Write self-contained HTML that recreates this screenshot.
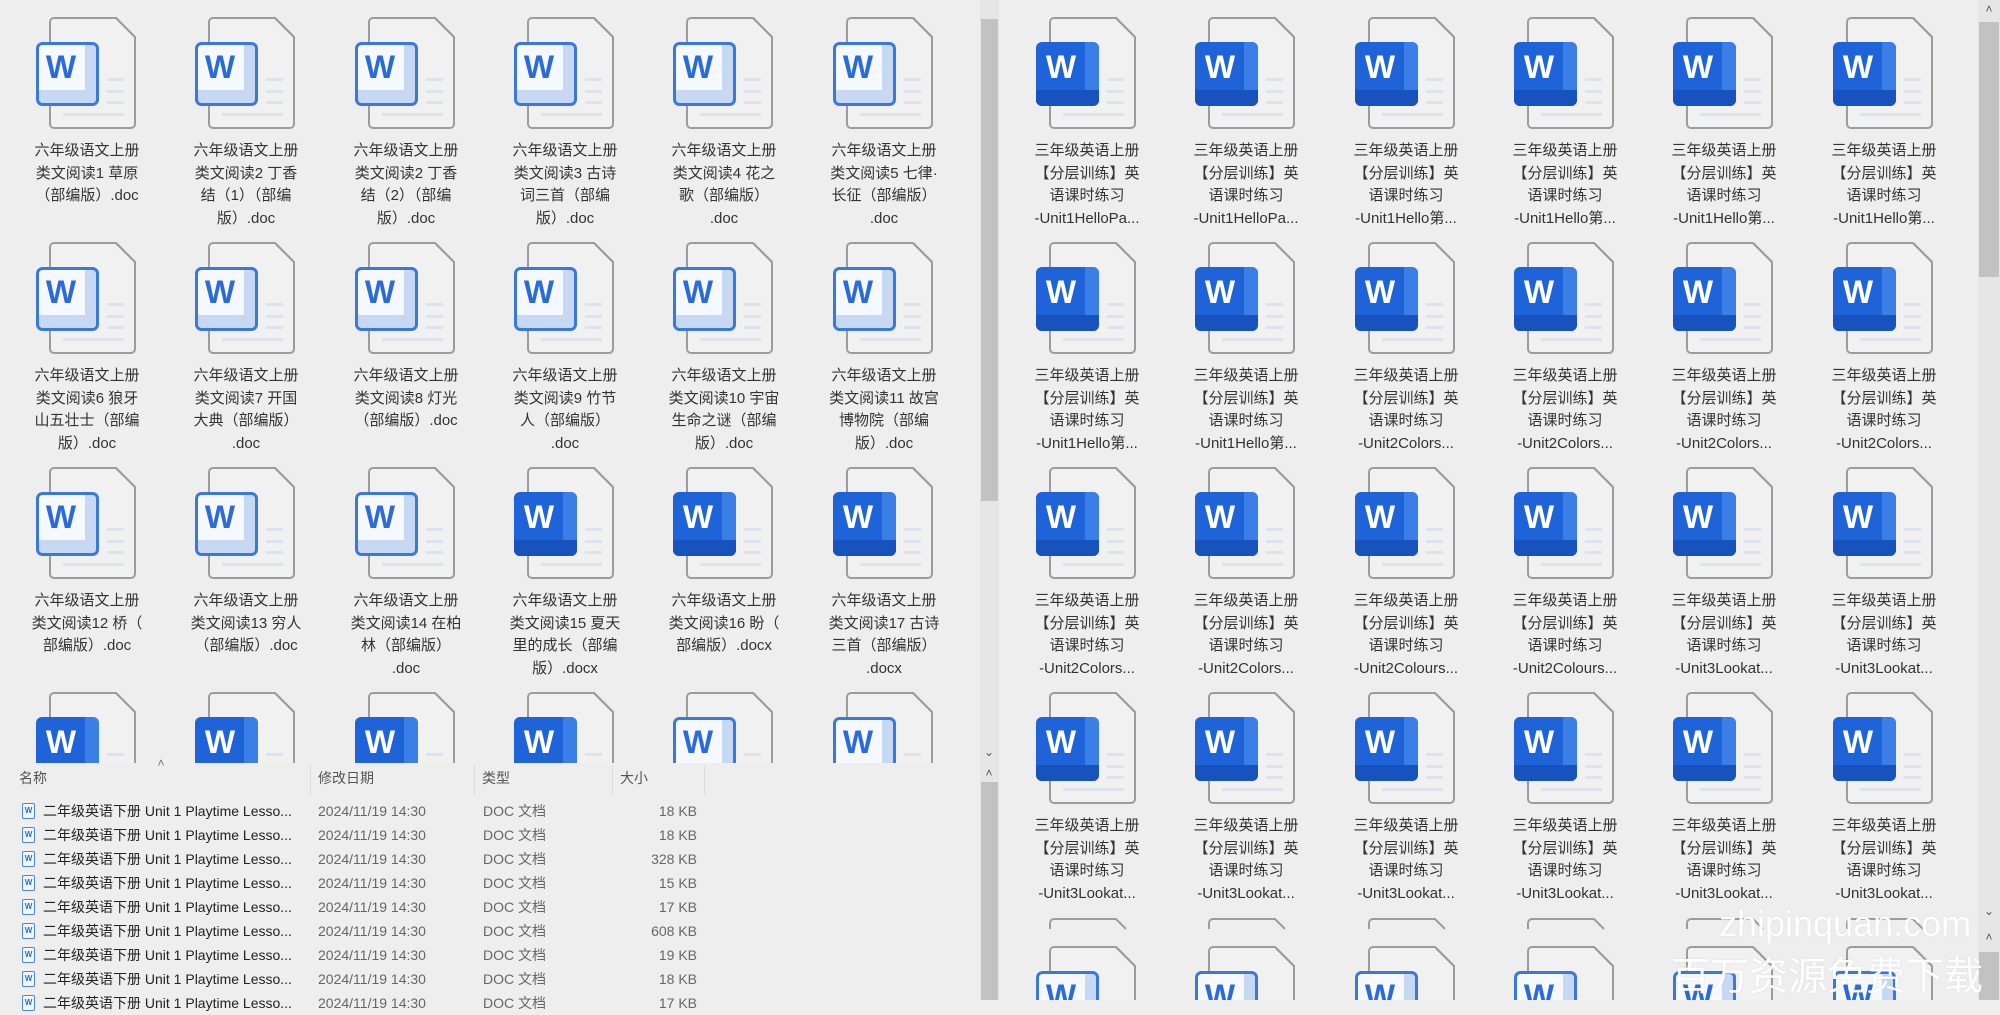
<!DOCTYPE html>
<html><head><meta charset="utf-8"><style>
*{margin:0;padding:0;box-sizing:border-box}
body{width:2000px;height:1000px;overflow:hidden;background:#eeeeee;position:relative;font-family:"Liberation Sans","Noto Sans CJK SC",sans-serif;color:#333}
.pane{position:absolute;overflow:hidden}
.i{position:absolute;overflow:visible}
.i text{font:bold 32px "Liberation Sans",sans-serif;text-anchor:middle}
.o text{fill:#2b6bd8}.s text{fill:#fff}
.t{position:absolute;width:150px;text-align:center;font-size:15px;line-height:22.5px;color:#333;white-space:nowrap;margin-top:-6px}
.sb{position:absolute;background:#e6e6e6}
.th{position:absolute;background:#c2c2c2}
.ar{position:absolute;font-size:12px;color:#555;width:18px;text-align:center}
.hd{position:absolute;top:768px;font-size:14px;color:#555}
.sep{position:absolute;top:765px;width:1px;height:30px;background:#dcdcdc}
.r{position:absolute;left:0;width:980px;height:24px;font-size:14px;line-height:24px}
.r span{position:absolute;white-space:nowrap}
.r .n{left:43px;color:#222}.r .d{left:318px;color:#666}.r .y{left:483px;color:#666}.r .z{right:283px;color:#666}
.r b{position:absolute;left:22px;top:4px;width:13px;height:16px;border:1.5px solid #4a86dc;border-radius:2px;background:#f2f6fd;font:bold 8px "Liberation Sans";color:#2b6bd8;text-align:center;line-height:13px}
.wm{position:absolute;color:rgba(255,255,255,.95);text-shadow:0 0 2px rgba(0,0,0,.08);white-space:nowrap}
</style></head><body>
<svg width="0" height="0" style="position:absolute"><defs>
<symbol id="p" viewBox="0 0 104 114"><path d="M20 1H82L101 20V107a4 4 0 0 1-4 4H20a4 4 0 0 1-4-4V5a4 4 0 0 1 4-4Z" fill="#f1f1f1" stroke="#9c9c9c" stroke-width="2"/><path d="M82 1L101 20" stroke="#9c9c9c" stroke-width="2"/><g fill="#dde3ec"><rect x="73" y="61" width="17" height="3"/><rect x="73" y="73" width="17" height="3"/><rect x="73" y="84" width="17" height="3"/><rect x="29" y="96" width="61" height="3"/></g></symbol>
<symbol id="bo" viewBox="0 0 104 114"><rect x="2" y="25" width="63" height="64" rx="6" fill="#f5f8fd"/><path d="M51 26.5H60a4 4 0 0 1 4 4V84a4 4 0 0 1-4 4H51Z" fill="#c6d8f2"/><path d="M3.5 73H64V84a4 4 0 0 1-4 4H8a4 4 0 0 1-4-4Z" fill="#c6d8f2"/><rect x="3.5" y="26.5" width="60" height="61" rx="5" fill="none" stroke="#3a78dc" stroke-width="3"/></symbol>
<symbol id="bs" viewBox="0 0 104 114"><rect x="2" y="25" width="63" height="64" rx="6" fill="#1f63d8"/><path d="M51 25H59a6 6 0 0 1 6 6V83a6 6 0 0 1-6 6H51Z" fill="#3a7ee6"/><path d="M2 73H65V83a6 6 0 0 1-6 6H8a6 6 0 0 1-6-6Z" fill="#1752bd"/></symbol>
</defs></svg>

<!-- LEFT ICON PANE -->
<div class="pane" style="left:0;top:0;width:980px;height:763px">
<svg class="i o" style="left:34px;top:17px" width="104" height="114"><use href="#p"/><use href="#bo"/><text x="27" y="61">W</text></svg>
<svg class="i o" style="left:193px;top:17px" width="104" height="114"><use href="#p"/><use href="#bo"/><text x="27" y="61">W</text></svg>
<svg class="i o" style="left:353px;top:17px" width="104" height="114"><use href="#p"/><use href="#bo"/><text x="27" y="61">W</text></svg>
<svg class="i o" style="left:512px;top:17px" width="104" height="114"><use href="#p"/><use href="#bo"/><text x="27" y="61">W</text></svg>
<svg class="i o" style="left:671px;top:17px" width="104" height="114"><use href="#p"/><use href="#bo"/><text x="27" y="61">W</text></svg>
<svg class="i o" style="left:831px;top:17px" width="104" height="114"><use href="#p"/><use href="#bo"/><text x="27" y="61">W</text></svg>
<div class="t" style="left:12px;top:146px">六年级语文上册<br>类文阅读1 草原<br>（部编版）.doc</div>
<div class="t" style="left:171px;top:146px">六年级语文上册<br>类文阅读2 丁香<br>结（1）（部编<br>版）.doc</div>
<div class="t" style="left:331px;top:146px">六年级语文上册<br>类文阅读2 丁香<br>结（2）（部编<br>版）.doc</div>
<div class="t" style="left:490px;top:146px">六年级语文上册<br>类文阅读3 古诗<br>词三首（部编<br>版）.doc</div>
<div class="t" style="left:649px;top:146px">六年级语文上册<br>类文阅读4 花之<br>歌（部编版）<br>.doc</div>
<div class="t" style="left:809px;top:146px">六年级语文上册<br>类文阅读5 七律·<br>长征（部编版）<br>.doc</div>

<svg class="i o" style="left:34px;top:242px" width="104" height="114"><use href="#p"/><use href="#bo"/><text x="27" y="61">W</text></svg>
<svg class="i o" style="left:193px;top:242px" width="104" height="114"><use href="#p"/><use href="#bo"/><text x="27" y="61">W</text></svg>
<svg class="i o" style="left:353px;top:242px" width="104" height="114"><use href="#p"/><use href="#bo"/><text x="27" y="61">W</text></svg>
<svg class="i o" style="left:512px;top:242px" width="104" height="114"><use href="#p"/><use href="#bo"/><text x="27" y="61">W</text></svg>
<svg class="i o" style="left:671px;top:242px" width="104" height="114"><use href="#p"/><use href="#bo"/><text x="27" y="61">W</text></svg>
<svg class="i o" style="left:831px;top:242px" width="104" height="114"><use href="#p"/><use href="#bo"/><text x="27" y="61">W</text></svg>
<div class="t" style="left:12px;top:371px">六年级语文上册<br>类文阅读6 狼牙<br>山五壮士（部编<br>版）.doc</div>
<div class="t" style="left:171px;top:371px">六年级语文上册<br>类文阅读7 开国<br>大典（部编版）<br>.doc</div>
<div class="t" style="left:331px;top:371px">六年级语文上册<br>类文阅读8 灯光<br>（部编版）.doc</div>
<div class="t" style="left:490px;top:371px">六年级语文上册<br>类文阅读9 竹节<br>人（部编版）<br>.doc</div>
<div class="t" style="left:649px;top:371px">六年级语文上册<br>类文阅读10 宇宙<br>生命之谜（部编<br>版）.doc</div>
<div class="t" style="left:809px;top:371px">六年级语文上册<br>类文阅读11 故宫<br>博物院（部编<br>版）.doc</div>

<svg class="i o" style="left:34px;top:467px" width="104" height="114"><use href="#p"/><use href="#bo"/><text x="27" y="61">W</text></svg>
<svg class="i o" style="left:193px;top:467px" width="104" height="114"><use href="#p"/><use href="#bo"/><text x="27" y="61">W</text></svg>
<svg class="i o" style="left:353px;top:467px" width="104" height="114"><use href="#p"/><use href="#bo"/><text x="27" y="61">W</text></svg>
<svg class="i s" style="left:512px;top:467px" width="104" height="114"><use href="#p"/><use href="#bs"/><text x="27" y="61">W</text></svg>
<svg class="i s" style="left:671px;top:467px" width="104" height="114"><use href="#p"/><use href="#bs"/><text x="27" y="61">W</text></svg>
<svg class="i s" style="left:831px;top:467px" width="104" height="114"><use href="#p"/><use href="#bs"/><text x="27" y="61">W</text></svg>
<div class="t" style="left:12px;top:596px">六年级语文上册<br>类文阅读12 桥（<br>部编版）.doc</div>
<div class="t" style="left:171px;top:596px">六年级语文上册<br>类文阅读13 穷人<br>（部编版）.doc</div>
<div class="t" style="left:331px;top:596px">六年级语文上册<br>类文阅读14 在柏<br>林（部编版）<br>.doc</div>
<div class="t" style="left:490px;top:596px">六年级语文上册<br>类文阅读15 夏天<br>里的成长（部编<br>版）.docx</div>
<div class="t" style="left:649px;top:596px">六年级语文上册<br>类文阅读16 盼（<br>部编版）.docx</div>
<div class="t" style="left:809px;top:596px">六年级语文上册<br>类文阅读17 古诗<br>三首（部编版）<br>.docx</div>

<svg class="i s" style="left:34px;top:692px" width="104" height="114"><use href="#p"/><use href="#bs"/><text x="27" y="61">W</text></svg>
<svg class="i s" style="left:193px;top:692px" width="104" height="114"><use href="#p"/><use href="#bs"/><text x="27" y="61">W</text></svg>
<svg class="i s" style="left:353px;top:692px" width="104" height="114"><use href="#p"/><use href="#bs"/><text x="27" y="61">W</text></svg>
<svg class="i s" style="left:512px;top:692px" width="104" height="114"><use href="#p"/><use href="#bs"/><text x="27" y="61">W</text></svg>
<svg class="i o" style="left:671px;top:692px" width="104" height="114"><use href="#p"/><use href="#bo"/><text x="27" y="61">W</text></svg>
<svg class="i o" style="left:831px;top:692px" width="104" height="114"><use href="#p"/><use href="#bo"/><text x="27" y="61">W</text></svg>
</div>

<!-- left scrollbars -->
<div class="sb" style="left:980px;top:0;width:19px;height:765px"></div>
<div class="th" style="left:981px;top:19px;width:17px;height:482px"></div>
<div class="ar" style="left:980px;top:745px">⌄</div>
<div class="sb" style="left:980px;top:765px;width:19px;height:235px"></div>
<div class="ar" style="left:980px;top:766px">˄</div>
<div class="th" style="left:981px;top:782px;width:17px;height:218px"></div>

<!-- list pane -->
<div class="ar" style="left:152px;top:756px;color:#777">˄</div>
<div class="hd" style="left:19px">名称</div>
<div class="hd" style="left:318px">修改日期</div>
<div class="hd" style="left:482px">类型</div>
<div class="hd" style="left:620px">大小</div>
<div class="sep" style="left:310px"></div><div class="sep" style="left:474px"></div><div class="sep" style="left:612px"></div><div class="sep" style="left:704px"></div>
<div class="r" style="top:799px"><b>W</b><span class="n">二年级英语下册 Unit 1 Playtime Lesso...</span><span class="d">2024/11/19 14:30</span><span class="y">DOC 文档</span><span class="z">18 KB</span></div>
<div class="r" style="top:823px"><b>W</b><span class="n">二年级英语下册 Unit 1 Playtime Lesso...</span><span class="d">2024/11/19 14:30</span><span class="y">DOC 文档</span><span class="z">18 KB</span></div>
<div class="r" style="top:847px"><b>W</b><span class="n">二年级英语下册 Unit 1 Playtime Lesso...</span><span class="d">2024/11/19 14:30</span><span class="y">DOC 文档</span><span class="z">328 KB</span></div>
<div class="r" style="top:871px"><b>W</b><span class="n">二年级英语下册 Unit 1 Playtime Lesso...</span><span class="d">2024/11/19 14:30</span><span class="y">DOC 文档</span><span class="z">15 KB</span></div>
<div class="r" style="top:895px"><b>W</b><span class="n">二年级英语下册 Unit 1 Playtime Lesso...</span><span class="d">2024/11/19 14:30</span><span class="y">DOC 文档</span><span class="z">17 KB</span></div>
<div class="r" style="top:919px"><b>W</b><span class="n">二年级英语下册 Unit 1 Playtime Lesso...</span><span class="d">2024/11/19 14:30</span><span class="y">DOC 文档</span><span class="z">608 KB</span></div>
<div class="r" style="top:943px"><b>W</b><span class="n">二年级英语下册 Unit 1 Playtime Lesso...</span><span class="d">2024/11/19 14:30</span><span class="y">DOC 文档</span><span class="z">19 KB</span></div>
<div class="r" style="top:967px"><b>W</b><span class="n">二年级英语下册 Unit 1 Playtime Lesso...</span><span class="d">2024/11/19 14:30</span><span class="y">DOC 文档</span><span class="z">18 KB</span></div>
<div class="r" style="top:991px"><b>W</b><span class="n">二年级英语下册 Unit 1 Playtime Lesso...</span><span class="d">2024/11/19 14:30</span><span class="y">DOC 文档</span><span class="z">17 KB</span></div>

<!-- RIGHT PANE -->
<div class="pane" style="left:1000px;top:0;width:978px;height:1000px">
<svg class="i s" style="left:34px;top:17px" width="104" height="114"><use href="#p"/><use href="#bs"/><text x="27" y="61">W</text></svg>
<svg class="i s" style="left:193px;top:17px" width="104" height="114"><use href="#p"/><use href="#bs"/><text x="27" y="61">W</text></svg>
<svg class="i s" style="left:353px;top:17px" width="104" height="114"><use href="#p"/><use href="#bs"/><text x="27" y="61">W</text></svg>
<svg class="i s" style="left:512px;top:17px" width="104" height="114"><use href="#p"/><use href="#bs"/><text x="27" y="61">W</text></svg>
<svg class="i s" style="left:671px;top:17px" width="104" height="114"><use href="#p"/><use href="#bs"/><text x="27" y="61">W</text></svg>
<svg class="i s" style="left:831px;top:17px" width="104" height="114"><use href="#p"/><use href="#bs"/><text x="27" y="61">W</text></svg>
<div class="t" style="left:12px;top:146px">三年级英语上册<br>【分层训练】英<br>语课时练习<br>-Unit1HelloPa...</div>
<div class="t" style="left:171px;top:146px">三年级英语上册<br>【分层训练】英<br>语课时练习<br>-Unit1HelloPa...</div>
<div class="t" style="left:331px;top:146px">三年级英语上册<br>【分层训练】英<br>语课时练习<br>-Unit1Hello第...</div>
<div class="t" style="left:490px;top:146px">三年级英语上册<br>【分层训练】英<br>语课时练习<br>-Unit1Hello第...</div>
<div class="t" style="left:649px;top:146px">三年级英语上册<br>【分层训练】英<br>语课时练习<br>-Unit1Hello第...</div>
<div class="t" style="left:809px;top:146px">三年级英语上册<br>【分层训练】英<br>语课时练习<br>-Unit1Hello第...</div>

<svg class="i s" style="left:34px;top:242px" width="104" height="114"><use href="#p"/><use href="#bs"/><text x="27" y="61">W</text></svg>
<svg class="i s" style="left:193px;top:242px" width="104" height="114"><use href="#p"/><use href="#bs"/><text x="27" y="61">W</text></svg>
<svg class="i s" style="left:353px;top:242px" width="104" height="114"><use href="#p"/><use href="#bs"/><text x="27" y="61">W</text></svg>
<svg class="i s" style="left:512px;top:242px" width="104" height="114"><use href="#p"/><use href="#bs"/><text x="27" y="61">W</text></svg>
<svg class="i s" style="left:671px;top:242px" width="104" height="114"><use href="#p"/><use href="#bs"/><text x="27" y="61">W</text></svg>
<svg class="i s" style="left:831px;top:242px" width="104" height="114"><use href="#p"/><use href="#bs"/><text x="27" y="61">W</text></svg>
<div class="t" style="left:12px;top:371px">三年级英语上册<br>【分层训练】英<br>语课时练习<br>-Unit1Hello第...</div>
<div class="t" style="left:171px;top:371px">三年级英语上册<br>【分层训练】英<br>语课时练习<br>-Unit1Hello第...</div>
<div class="t" style="left:331px;top:371px">三年级英语上册<br>【分层训练】英<br>语课时练习<br>-Unit2Colors...</div>
<div class="t" style="left:490px;top:371px">三年级英语上册<br>【分层训练】英<br>语课时练习<br>-Unit2Colors...</div>
<div class="t" style="left:649px;top:371px">三年级英语上册<br>【分层训练】英<br>语课时练习<br>-Unit2Colors...</div>
<div class="t" style="left:809px;top:371px">三年级英语上册<br>【分层训练】英<br>语课时练习<br>-Unit2Colors...</div>

<svg class="i s" style="left:34px;top:467px" width="104" height="114"><use href="#p"/><use href="#bs"/><text x="27" y="61">W</text></svg>
<svg class="i s" style="left:193px;top:467px" width="104" height="114"><use href="#p"/><use href="#bs"/><text x="27" y="61">W</text></svg>
<svg class="i s" style="left:353px;top:467px" width="104" height="114"><use href="#p"/><use href="#bs"/><text x="27" y="61">W</text></svg>
<svg class="i s" style="left:512px;top:467px" width="104" height="114"><use href="#p"/><use href="#bs"/><text x="27" y="61">W</text></svg>
<svg class="i s" style="left:671px;top:467px" width="104" height="114"><use href="#p"/><use href="#bs"/><text x="27" y="61">W</text></svg>
<svg class="i s" style="left:831px;top:467px" width="104" height="114"><use href="#p"/><use href="#bs"/><text x="27" y="61">W</text></svg>
<div class="t" style="left:12px;top:596px">三年级英语上册<br>【分层训练】英<br>语课时练习<br>-Unit2Colors...</div>
<div class="t" style="left:171px;top:596px">三年级英语上册<br>【分层训练】英<br>语课时练习<br>-Unit2Colors...</div>
<div class="t" style="left:331px;top:596px">三年级英语上册<br>【分层训练】英<br>语课时练习<br>-Unit2Colours...</div>
<div class="t" style="left:490px;top:596px">三年级英语上册<br>【分层训练】英<br>语课时练习<br>-Unit2Colours...</div>
<div class="t" style="left:649px;top:596px">三年级英语上册<br>【分层训练】英<br>语课时练习<br>-Unit3Lookat...</div>
<div class="t" style="left:809px;top:596px">三年级英语上册<br>【分层训练】英<br>语课时练习<br>-Unit3Lookat...</div>

<svg class="i s" style="left:34px;top:692px" width="104" height="114"><use href="#p"/><use href="#bs"/><text x="27" y="61">W</text></svg>
<svg class="i s" style="left:193px;top:692px" width="104" height="114"><use href="#p"/><use href="#bs"/><text x="27" y="61">W</text></svg>
<svg class="i s" style="left:353px;top:692px" width="104" height="114"><use href="#p"/><use href="#bs"/><text x="27" y="61">W</text></svg>
<svg class="i s" style="left:512px;top:692px" width="104" height="114"><use href="#p"/><use href="#bs"/><text x="27" y="61">W</text></svg>
<svg class="i s" style="left:671px;top:692px" width="104" height="114"><use href="#p"/><use href="#bs"/><text x="27" y="61">W</text></svg>
<svg class="i s" style="left:831px;top:692px" width="104" height="114"><use href="#p"/><use href="#bs"/><text x="27" y="61">W</text></svg>
<div class="t" style="left:12px;top:821px">三年级英语上册<br>【分层训练】英<br>语课时练习<br>-Unit3Lookat...</div>
<div class="t" style="left:171px;top:821px">三年级英语上册<br>【分层训练】英<br>语课时练习<br>-Unit3Lookat...</div>
<div class="t" style="left:331px;top:821px">三年级英语上册<br>【分层训练】英<br>语课时练习<br>-Unit3Lookat...</div>
<div class="t" style="left:490px;top:821px">三年级英语上册<br>【分层训练】英<br>语课时练习<br>-Unit3Lookat...</div>
<div class="t" style="left:649px;top:821px">三年级英语上册<br>【分层训练】英<br>语课时练习<br>-Unit3Lookat...</div>
<div class="t" style="left:809px;top:821px">三年级英语上册<br>【分层训练】英<br>语课时练习<br>-Unit3Lookat...</div>

<!-- partial row 5 -->
<svg class="i" style="left:34px;top:918px" width="104" height="12"><path d="M16 11V5a4 4 0 0 1 4-4H82L92 11" fill="none" stroke="#9c9c9c" stroke-width="2"/></svg>
<svg class="i" style="left:193px;top:918px" width="104" height="12"><path d="M16 11V5a4 4 0 0 1 4-4H82L92 11" fill="none" stroke="#9c9c9c" stroke-width="2"/></svg>
<svg class="i" style="left:353px;top:918px" width="104" height="12"><path d="M16 11V5a4 4 0 0 1 4-4H82L92 11" fill="none" stroke="#9c9c9c" stroke-width="2"/></svg>
<svg class="i" style="left:512px;top:918px" width="104" height="12"><path d="M16 11V5a4 4 0 0 1 4-4H82L92 11" fill="none" stroke="#9c9c9c" stroke-width="2"/></svg>
<svg class="i" style="left:671px;top:918px" width="104" height="12"><path d="M16 11V5a4 4 0 0 1 4-4H82L92 11" fill="none" stroke="#9c9c9c" stroke-width="2"/></svg>
<svg class="i" style="left:831px;top:918px" width="104" height="12"><path d="M16 11V5a4 4 0 0 1 4-4H82L92 11" fill="none" stroke="#9c9c9c" stroke-width="2"/></svg>
<svg class="i o" style="left:34px;top:946px" width="104" height="114"><use href="#p"/><use href="#bo"/><text x="27" y="61">W</text></svg>
<svg class="i o" style="left:193px;top:946px" width="104" height="114"><use href="#p"/><use href="#bo"/><text x="27" y="61">W</text></svg>
<svg class="i o" style="left:353px;top:946px" width="104" height="114"><use href="#p"/><use href="#bo"/><text x="27" y="61">W</text></svg>
<svg class="i o" style="left:512px;top:946px" width="104" height="114"><use href="#p"/><use href="#bo"/><text x="27" y="61">W</text></svg>
<svg class="i o" style="left:671px;top:946px" width="104" height="114"><use href="#p"/><use href="#bo"/><text x="27" y="61">W</text></svg>
<svg class="i o" style="left:831px;top:946px" width="104" height="114"><use href="#p"/><use href="#bo"/><text x="27" y="61">W</text></svg>
</div>

<!-- right scrollbar -->
<div class="sb" style="left:1978px;top:0;width:22px;height:1000px"></div>
<div class="ar" style="left:1980px;top:2px">˄</div>
<div class="th" style="left:1979px;top:22px;width:20px;height:255px"></div>
<div class="ar" style="left:1980px;top:904px">⌄</div>
<div class="ar" style="left:1980px;top:930px">˄</div>
<div class="th" style="left:1979px;top:952px;width:20px;height:48px"></div>

<!-- watermark -->
<div class="wm" style="left:1719px;top:903px;font-size:36px;font-family:'Liberation Sans',sans-serif">zhipinquan.com</div>
<div class="wm" style="left:1671px;top:950px;font-size:39px;font-family:'Noto Sans CJK SC',sans-serif;line-height:48px">百万资源免费下载</div>
</body></html>
